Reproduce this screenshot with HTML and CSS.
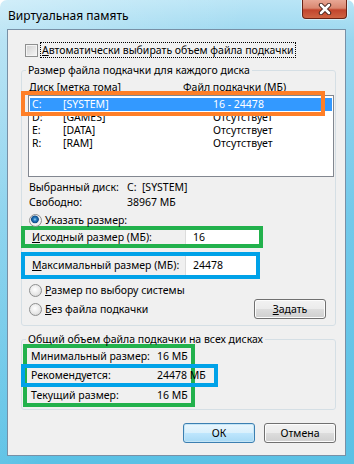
FILE: index.html
```html
<!DOCTYPE html>
<html>
<head>
  <meta charset="utf-8">
  <title>Виртуальная память</title>
  <link rel="stylesheet" href="styles.css">
</head>
<body>
  <div class="window">
    <div class="titlebar">
      <span class="title">Виртуальная память</span>
      <div class="close-btn">
        <svg width="14" height="12" viewBox="0 0 14 12">
          <path d="M3 2 L11 10 M11 2 L3 10" stroke="#3a1a14" stroke-width="4.4" stroke-linecap="round"/>
          <path d="M3 2 L11 10 M11 2 L3 10" stroke="#ffffff" stroke-width="2.6" stroke-linecap="round"/>
        </svg>
      </div>
    </div>

    <div class="client">
      <div class="auto-row">
        <span class="checkbox"></span>
        <span class="focus-text"><u>А</u>втоматически выбирать объем файла подкачки</span>
      </div>

      <!-- Размер по дискам -->
      <fieldset class="group group-drives">
        <legend>Размер файла подкачки для каждого диска</legend>
        <div class="list-head">
          <span class="col-drive">Диск [метка тома]</span>
          <span>Файл подкачки (МБ)</span>
        </div>
        <div class="listbox">
          <div class="mark-orange"></div>
          <div class="list-row selected"><span class="c1">C:</span><span class="c2">[SYSTEM]</span><span>16 - 24478</span></div>
          <div class="list-row"><span class="c1">D:</span><span class="c2">[GAMES]</span><span>Отсутствует</span></div>
          <div class="list-row"><span class="c1">E:</span><span class="c2">[DATA]</span><span>Отсутствует</span></div>
          <div class="list-row"><span class="c1">R:</span><span class="c2">[RAM]</span><span>Отсутствует</span></div>
        </div>
        <div class="info-row first"><span class="info-label">Выбранный диск:</span><span>C:&nbsp;&nbsp;[SYSTEM]</span></div>
        <div class="info-row"><span class="info-label">Свободно:</span><span>38967 МБ</span></div>

        <div class="radio-row custom"><span class="radio checked"></span>Указать размер:</div>
        <div class="size-field mark-green">
          <label class="size-label"><u>И</u>сходный размер (МБ):</label>
          <div class="input">16</div>
        </div>
        <div class="size-field mark-blue">
          <label class="size-label"><u>М</u>аксимальный размер (МБ):</label>
          <div class="input">24478</div>
        </div>
        <div class="radio-row system"><span class="radio"></span><u>Р</u>азмер по выбору системы</div>
        <div class="radio-row none">
          <span class="radio"></span><u>Б</u>ез файла подкачки
          <button class="btn set-btn"><u>З</u>адать</button>
        </div>
      </fieldset>

      <!-- Общий объем -->
      <fieldset class="group group-total">
        <legend>Общий объем файла подкачки на всех дисках</legend>
        <div class="totals mark-green">
          <div class="total-row"><span class="total-label">Минимальный размер:</span><span>16 МБ</span></div>
          <div class="total-row mark-blue"><span class="total-label">Рекомендуется:</span><span>24478 МБ</span></div>
          <div class="total-row"><span class="total-label">Текущий размер:</span><span>16 МБ</span></div>
        </div>
      </fieldset>

      <div class="dialog-buttons">
        <button class="btn btn-default">ОК</button>
        <button class="btn">Отмена</button>
      </div>
    </div>
  </div>
</body>
</html>
```

FILE: styles.css
```css
body {
  margin: 0;
  padding: 0;
  font-family: "Noto Sans", sans-serif;
  font-size: 10.5px;
  color: #000000;
  white-space: nowrap;
}

u {
  text-decoration: underline;
}

.window {
  width: 354px;
  height: 464px;
  box-sizing: border-box;
  border-radius: 7px 7px 0 0;
  background:
    linear-gradient(115deg, rgba(255, 255, 255, 0.35) 0, rgba(255, 255, 255, 0) 45%),
    linear-gradient(180deg, #b9e5f6 0, #98d6ef 40px, #72c9ea 220px, #5ac1e5 100%);
  overflow: hidden;
}

.titlebar {
  height: 29px;
  display: flex;
  justify-content: space-between;
  align-items: flex-start;
}

.title {
  padding-left: 8px;
  line-height: 31px;
  font-size: 12px;
}

.close-btn {
  width: 45px;
  height: 19px;
  margin-right: 7px;
  box-sizing: border-box;
  border: 1px solid #6b2416;
  border-top: none;
  border-radius: 0 0 4px 4px;
  background: linear-gradient(180deg, #e8a795 0, #d98770 45%, #c2452d 55%, #cf6443 100%);
  box-shadow: 0 0 0 1px rgba(255, 255, 255, 0.5);
  display: flex;
  align-items: center;
  justify-content: center;
}

.client {
  margin-left: 7px;
  width: 339px;
  height: 427px;
  box-sizing: border-box;
  border: 1px solid #7890a6;
  background-color: #f0f0f0;
  padding-left: 13px;
  overflow: hidden;
}

.auto-row {
  display: flex;
  align-items: center;
  height: 16px;
  margin-top: 12px;
  margin-left: 4px;
}

.checkbox {
  width: 13px;
  height: 13px;
  box-sizing: border-box;
  border: 1px solid #8e8f8f;
  background: linear-gradient(135deg, #cfcfcf 0, #f7f7f7 100%);
  box-shadow: inset 0 0 0 1px #f4f4f4;
  margin-right: 2px;
  margin-top: 1px;
}

.focus-text {
  border: 1px dotted #000000;
  padding: 0 1px;
  line-height: 14px;
}

/* групповые рамки */
.group {
  width: 315px;
  box-sizing: border-box;
  margin: 5px 0 0 0;
  padding: 0;
  border: 1px solid #d5dfe5;
  border-radius: 3px;
  min-width: 0;
}

.group legend {
  margin-left: 4px;
  padding: 0 2px;
  line-height: 14px;
}

.group-drives {
  padding-bottom: 6px;
}

.list-head {
  display: flex;
  height: 14px;
  line-height: 14px;
  margin-top: 3px;
  padding-left: 7px;
}

.col-drive {
  width: 154px;
}

.listbox {
  position: relative;
  margin: 1px 0 0 6px;
  width: 306px;
  height: 82px;
  box-sizing: border-box;
  border: 1px solid #828790;
  background-color: #ffffff;
  padding-top: 2px;
}

.list-row {
  display: flex;
  height: 13px;
  line-height: 13px;
  margin: 0 1px;
  padding-left: 2px;
}

.list-row.selected {
  background-color: #3399ff;
  color: #ffffff;
}

.list-row .c1 {
  width: 31px;
}

.list-row .c2 {
  width: 150px;
}

.mark-orange {
  position: absolute;
  left: -8px;
  top: -5px;
  width: 304px;
  height: 25px;
  box-sizing: border-box;
  border: 4px solid #ff7f27;
}

.info-row {
  display: flex;
  height: 15px;
  line-height: 15px;
  padding-left: 7px;
}

.info-row.first {
  margin-top: 3px;
}

.info-label {
  width: 98px;
}

.radio-row {
  display: flex;
  align-items: center;
  padding-left: 7px;
  height: 14px;
  line-height: 14px;
}

.radio-row.custom {
  margin-top: 4px;
  height: 12px;
}

.radio-row.system {
  margin-top: 4px;
}

.radio-row.none {
  margin-top: 2px;
  height: 20px;
}

.radio {
  width: 13px;
  height: 13px;
  box-sizing: border-box;
  border-radius: 50%;
  border: 1px solid #8e8f8f;
  background: radial-gradient(circle at 45% 40%, #ffffff 0, #e8e8e8 55%, #c9c9c9 100%);
  margin-right: 3px;
  flex-shrink: 0;
}

.radio.checked {
  background: radial-gradient(circle at 45% 40%, #9fd6f5 0, #2a7fc2 1.5px, #0f4d8a 3.5px, #e6e6e6 4.2px, #f7f7f7 5px, #cfcfcf 100%);
}

/* поля ввода размера */
.size-field {
  display: flex;
  box-sizing: border-box;
  margin-left: -1px;
}

.size-label {
  width: 160px;
  padding-left: 7px;
  box-sizing: border-box;
}

.input {
  flex: 1;
  background-color: #ffffff;
  border-left: 1px solid #dcdcdc;
  padding-left: 7px;
}

.mark-green {
  border: 4px solid #22b14c;
}

.mark-blue {
  border: 4px solid #00a2e8;
}

.size-field.mark-green {
  width: 242px;
  height: 22px;
  line-height: 14px;
}

.size-field.mark-blue {
  width: 239px;
  height: 27px;
  line-height: 19px;
  margin-top: 4px;
}

.btn {
  font-family: "Noto Sans", sans-serif;
  font-size: 10.5px;
  width: 72px;
  height: 20px;
  padding: 0;
  border: 1px solid #707070;
  border-radius: 3px;
  background: linear-gradient(180deg, #f2f2f2 0, #ebebeb 50%, #dddddd 51%, #cfcfcf 100%);
  box-shadow: inset 0 0 0 1px #fcfcfc;
  color: #000000;
}

.set-btn {
  margin-left: auto;
  margin-right: 9px;
}

.group-total {
  margin-top: 6px;
  padding-bottom: 2px;
}

.totals {
  margin: -2px 0 0 1px;
  width: 172px;
  box-sizing: border-box;
}

.total-row {
  display: flex;
  height: 16px;
  line-height: 16px;
  padding-left: 4px;
}

.total-label {
  width: 126px;
}

.total-row.mark-blue {
  height: 23px;
  line-height: 15px;
  margin: 0 -27px 0 -6px;
  padding-left: 6px;
  box-sizing: border-box;
}

.dialog-buttons {
  display: flex;
  justify-content: flex-end;
  gap: 9px;
  margin-top: 13px;
  padding-right: 9px;
}

.btn-default {
  border-color: #3c7fb1;
  background: linear-gradient(180deg, #eaf6fd 0, #d9f0fc 50%, #bee6fd 51%, #a7d9f5 100%);
  box-shadow: inset 0 0 0 1px #c4e5f6;
}
```
